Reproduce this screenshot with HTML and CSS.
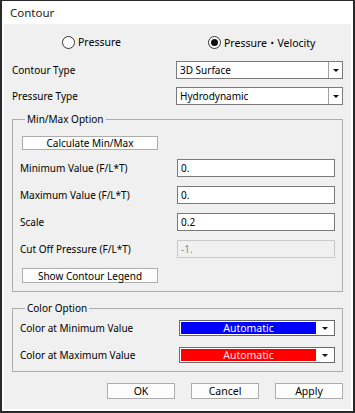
FILE: index.html
```html
<!DOCTYPE html>
<html>
<head>
<meta charset="utf-8">
<link rel="stylesheet" href="styles.css">
</head>
<body>
<div class="window">
  <div class="titlebar">Contour</div>
  <div class="body">
    <div class="radios">
      <label class="radio"><span class="circle"></span>Pressure</label>
      <label class="radio checked"><span class="circle"></span>Pressure・Velocity</label>
    </div>
    <div class="row row-first">
      <span class="lbl">Contour Type</span>
      <div class="combo"><span class="val">3D Surface</span><span class="arrow"><span class="tri"></span></span></div>
    </div>
    <div class="row row-second">
      <span class="lbl">Pressure Type</span>
      <div class="combo"><span class="val">Hydrodynamic</span><span class="arrow"><span class="tri"></span></span></div>
    </div>
    <fieldset class="group group-minmax">
      <legend>Min/Max Option</legend>
      <button class="btn btn-wide">Calculate Min/Max</button>
      <div class="row field-row first-field">
        <span class="lbl">Minimum Value (F/L*T)</span>
        <div class="input">0.</div>
      </div>
      <div class="row field-row">
        <span class="lbl">Maximum Value (F/L*T)</span>
        <div class="input">0.</div>
      </div>
      <div class="row field-row">
        <span class="lbl">Scale</span>
        <div class="input">0.2</div>
      </div>
      <div class="row field-row">
        <span class="lbl">Cut Off Pressure (F/L*T)</span>
        <div class="input disabled">-1.</div>
      </div>
      <button class="btn btn-wide btn-legend">Show Contour Legend</button>
    </fieldset>
    <fieldset class="group group-color">
      <legend>Color Option</legend>
      <div class="row color-row first-color">
        <span class="lbl">Color at Minimum Value</span>
        <div class="colorcombo"><span class="swatch blue">Automatic</span><span class="carrow"><span class="tri"></span></span></div>
      </div>
      <div class="row color-row second-color">
        <span class="lbl">Color at Maximum Value</span>
        <div class="colorcombo"><span class="swatch red">Automatic</span><span class="carrow"><span class="tri"></span></span></div>
      </div>
    </fieldset>
    <div class="actions">
      <button class="btn btn-action">OK</button>
      <button class="btn btn-action">Cancel</button>
      <button class="btn btn-action">Apply</button>
    </div>
  </div>
</div>
</body>
</html>
```

FILE: styles.css
```css
* { box-sizing: border-box; }
html, body { margin: 0; padding: 0; background: #ffffff; }
body {
  font-family: "Noto Sans", "Noto Sans CJK JP", sans-serif;
  font-size: 10px;
  color: #000;
}
.window {
  width: 355px;
  height: 413px;
  border: 2px solid #2a2a2a;
  border-top-width: 1px;
  background: #ffffff;
  padding: 0 2px 2px 2px;
  display: flex;
  flex-direction: column;
}
.titlebar {
  height: 23px;
  line-height: 23px;
  padding-left: 6px;
  font-size: 11.5px;
  color: #1a1a1a;
  flex: none;
}
.body {
  flex: 1;
  background: #f0f0f0;
  padding: 0 8px;
  display: flex;
  flex-direction: column;
}
.radios {
  display: flex;
  height: 18px;
  margin-top: 9px;
  padding-left: 50px;
  align-items: center;
}
.radio {
  display: flex;
  align-items: center;
  gap: 3px;
  font-size: 10.5px;
}
.radio + .radio { margin-left: 87px; }
.circle {
  width: 13px;
  height: 13px;
  border: 1px solid #333;
  border-radius: 50%;
  background: #fff;
  display: flex;
  align-items: center;
  justify-content: center;
}
.checked .circle::after {
  content: "";
  width: 7px;
  height: 7px;
  border-radius: 50%;
  background: #111;
}
.row {
  display: flex;
  align-items: center;
  height: 18px;
}
.row .lbl { flex: 1; }
.row-first { margin-top: 10px; }
.row-second { margin-top: 8px; }
.combo {
  width: 167px;
  height: 18px;
  border: 1px solid #7a7a7a;
  background: #fff;
  display: flex;
  align-items: stretch;
}
.combo .val { flex: 1; padding-left: 3px; display: flex; align-items: center; }
.combo .arrow {
  width: 14px;
  border-left: 1px solid #a0a0a0;
  display: flex;
  align-items: center;
  justify-content: center;
}
.tri {
  width: 0;
  height: 0;
  border-left: 3px solid transparent;
  border-right: 3px solid transparent;
  border-top: 3px solid #111;
}
.group {
  margin: 0;
  border: 1px solid #adadad;
  padding: 0 7px 8px 7px;
  min-width: 0;
}
.group legend {
  padding: 0 2px;
  margin-left: 5px;
  line-height: 13px;
  height: 13px;
}
.group-minmax { margin-top: 8px; padding-top: 10px; }
.btn {
  font-family: inherit;
  font-size: 10px;
  color: #000;
  background: #fdfdfd;
  border: 1px solid #adadad;
  padding: 0;
  margin: 0;
  display: flex;
  align-items: center;
  justify-content: center;
}
.btn-wide {
  width: 136px;
  height: 14px;
  margin-left: 2px;
}
.btn-legend { height: 15px; margin-top: 10px; }
.field-row { margin-top: 9px; }
.input {
  width: 158px;
  height: 18px;
  border: 1px solid #7a7a7a;
  background: #fff;
  padding-left: 3px;
  display: flex;
  align-items: center;
}
.input.disabled {
  background: #f0f0f0;
  border-color: #c8c8c8;
  color: #8a8a8a;
}
.group-color { margin-top: 10px; padding-top: 5px; }
.color-row { height: 16px; }
.second-color { margin-top: 11px; }
.colorcombo {
  width: 156px;
  height: 16px;
  border: 1px solid #6a6a6a;
  background: #fff;
  padding: 1px;
  display: flex;
}
.swatch {
  flex: 1;
  display: flex;
  align-items: center;
  justify-content: center;
  color: #fff;
  font-size: 10.5px;
}
.swatch.blue { background: #0000ff; }
.swatch.red { background: #ff0000; color: #ffe0e0; }
.carrow {
  width: 17px;
  display: flex;
  align-items: center;
  justify-content: center;
}
.actions {
  display: flex;
  justify-content: flex-end;
  gap: 16px;
  margin-top: 11px;
}
.btn-action {
  width: 68px;
  height: 16px;
  font-size: 10.5px;
}
```
